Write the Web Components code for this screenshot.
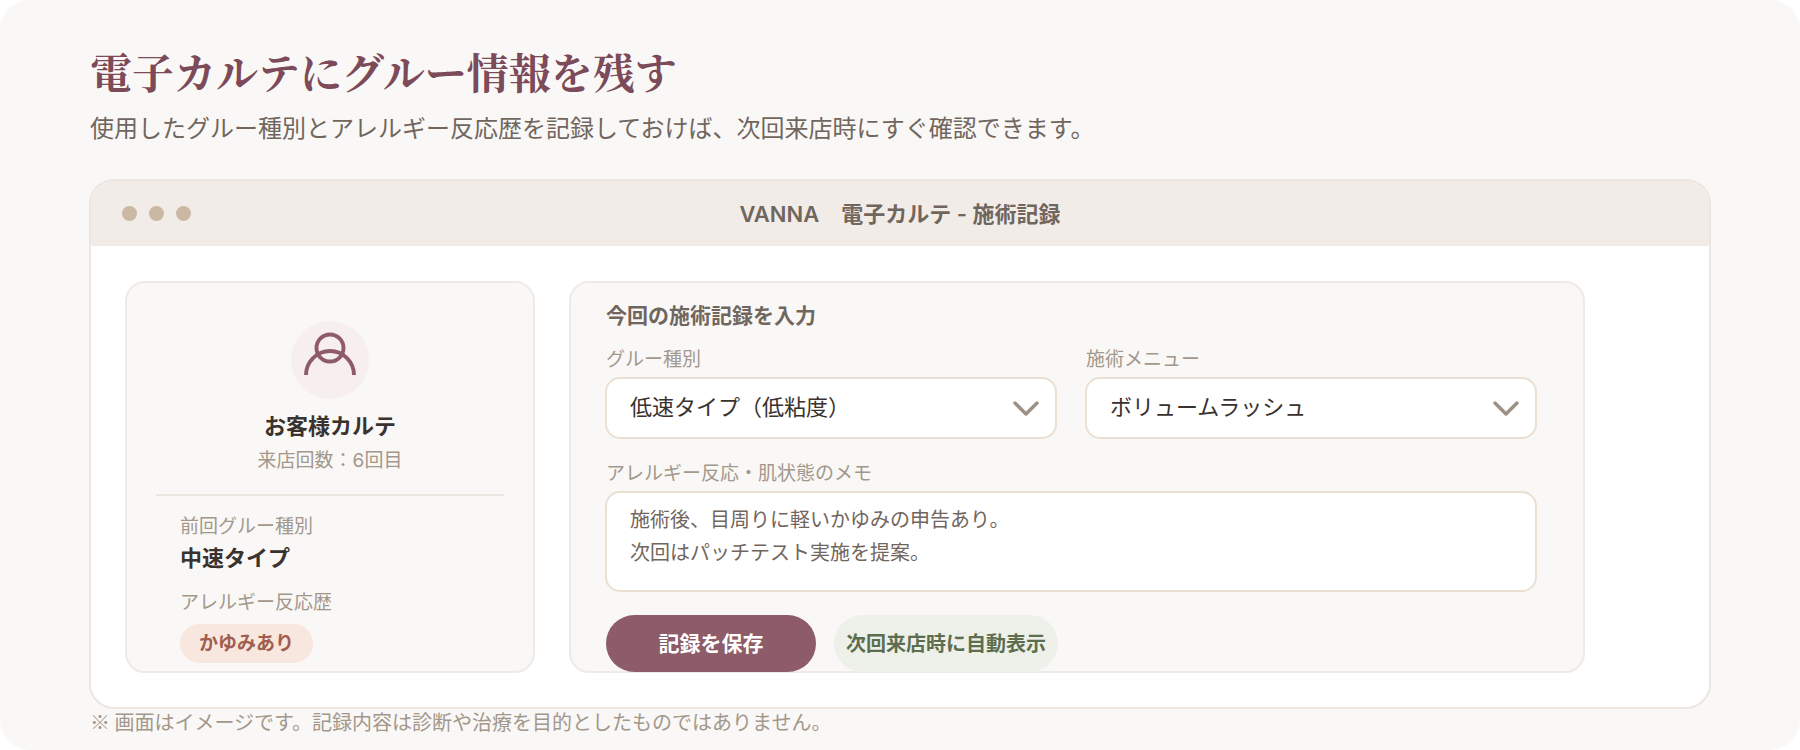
<!DOCTYPE html>
<html lang="ja">
<head>
<meta charset="utf-8">
<meta name="viewport" content="width=device-width, initial-scale=1">
<title>VANNA 電子カルテ - 施術記録</title>
<style>
  html { background: #fff; }
  body {
    margin: 0;
    font-family: Inter, "Noto Sans CJK JP", sans-serif;
    color: #3a322e;
    --paper: #f9f8f6;
    --panel-line: #f0eae6;
    --field-line: #ebdfd3;
    --plum: #8e5c68;
    --taupe: #71665e;
    --muted: #a3978b;
  }
</style>
</head>
<body>
<karte-page>
  <span slot="title">電子カルテにグルー情報を残す</span>
  <span slot="lead">使用したグルー種別とアレルギー反応歴を記録しておけば、次回来店時にすぐ確認できます。</span>
  <karte-window>
    <span slot="title">VANNA　電子カルテ - 施術記録</span>
    <client-card name="お客様カルテ" visits="来店回数：6回目">
      <client-fact label="前回グルー種別">中速タイプ</client-fact>
      <client-fact label="アレルギー反応歴"><tag-pill>かゆみあり</tag-pill></client-fact>
    </client-card>
    <record-form></record-form>
  </karte-window>
  <span slot="note">※ 画面はイメージです。記録内容は診断や治療を目的としたものではありません。</span>
</karte-page>

<script>
  function define(name, render) {
    customElements.define(name, class extends HTMLElement {
      constructor() {
        super();
        this.attachShadow({ mode: "open" });
      }
      connectedCallback() {
        this.shadowRoot.innerHTML = "<style>*{box-sizing:border-box}:host{box-sizing:border-box}</style>" + render(this);
      }
    });
  }

  define("karte-page", () => `
    <style>
      :host { display: block; min-height: 100vh; padding: 41px 89px 12px; background: var(--paper); border-radius: 30px; }
      h1 { margin: 0 1px; font: 700 42px/60px "Noto Serif CJK JP", "Noto Serif JP", "Noto Sans CJK JP", serif; color: #7c4a58; }
      .lead { margin: 11px 1px 34px; font-size: 24px; line-height: 33px; color: var(--taupe); }
      .note { margin: 0 1px; font-family: "Noto Sans CJK JP", sans-serif; font-size: 20px; line-height: 26px; color: var(--muted); }
    </style>
    <h1><slot name="title"></slot></h1>
    <p class="lead"><slot name="lead"></slot></p>
    <slot></slot>
    <p class="note"><slot name="note"></slot></p>`);

  define("karte-window", () => `
    <style>
      :host { display: block; background: #fff; border: 2px solid #ede6e0; border-radius: 25px; overflow: hidden; }
      header { display: grid; grid-template-columns: 1fr auto 1fr; align-items: center; height: 65px; padding: 0 31px; background: #f2ece8; }
      .dots { display: flex; gap: 12px; }
      .dots i { width: 15px; height: 15px; border-radius: 50%; background: #cbb8a4; }
      h2 { margin: 0; font-size: 22px; line-height: 32px; font-weight: 600; color: var(--taupe); }
      main { display: grid; grid-template-columns: 410fr 1016fr; gap: 34px; padding: 35px 124px 34px 34px; }
    </style>
    <header>
      <div class="dots" aria-hidden="true"><i></i><i></i><i></i></div>
      <h2><slot name="title"></slot></h2>
    </header>
    <main><slot></slot></main>`);

  define("client-card", el => `
    <style>
      :host { display: flex; flex-direction: column; padding: 37px 29px 8px; background: var(--paper); border: 2px solid var(--panel-line); border-radius: 20px; }
      .who { display: flex; flex-direction: column; align-items: center; padding-bottom: 20px; border-bottom: 2px solid #ebe6df; }
      svg { display: block; width: 80px; height: 80px; }
      h3 { margin: 10px 0 0; font-size: 22px; line-height: 32px; font-weight: 600; }
      p { margin: 6px 0 0; font-size: 19px; line-height: 26px; color: var(--muted); }
      .facts { display: flex; flex-direction: column; gap: 16px; padding: 18px 24px 0; }
    </style>
    <div class="who">
      <svg viewBox="0 0 80 80" fill="none" stroke="#8e5c68" stroke-width="3.9" aria-hidden="true">
        <circle cx="40" cy="40" r="39" fill="#f7eeef" stroke="none"/>
        <circle cx="40" cy="28" r="13.5"/>
        <path d="M16 55a24 24 0 0 1 48 0"/>
      </svg>
      <h3>${el.getAttribute("name")}</h3>
      <p>${el.getAttribute("visits")}</p>
    </div>
    <div class="facts"><slot></slot></div>`);

  define("client-fact", el => `
    <style>
      :host { display: block; }
      .label { font-size: 19px; line-height: 26px; color: var(--muted); }
      .value { margin-top: 2px; font-size: 22px; line-height: 32px; font-weight: 600; }
    </style>
    <div class="label">${el.getAttribute("label")}</div>
    <div class="value"><slot></slot></div>`);

  define("tag-pill", () => `
    <style>
      :host { display: flex; width: fit-content; height: 39px; align-items: center; margin-top: 8px; padding: 0 19px; border-radius: 20px; background: #f8e7de; color: #a15e4f; font-size: 19px; line-height: 26px; }
    </style>
    <slot></slot>`);

  define("select-field", el => `
    <style>
      :host { display: block; }
      label { display: block; margin: 0 1px 4px; font-size: 19px; line-height: 26px; color: var(--muted); }
      .box { display: grid; align-items: center; }
      select, svg { grid-area: 1 / 1; }
      select { appearance: none; width: 100%; height: 62px; margin: 0; padding: 0 60px 2px 23px; border: 2px solid var(--field-line); border-radius: 15px; background: #fff; color: inherit; font: 400 22px/32px Inter, "Noto Sans CJK JP", sans-serif; }
      svg { justify-self: end; width: 32px; height: 24px; margin-right: 15px; pointer-events: none; }
    </style>
    <label for="field">${el.getAttribute("label")}</label>
    <div class="box">
      <select id="field"><option selected>${el.getAttribute("value")}</option></select>
      <svg viewBox="0 0 32 24" fill="none" stroke="#9d9186" stroke-width="3.5" stroke-linecap="round" stroke-linejoin="round" aria-hidden="true"><path d="M5 7l11 11 11-11"/></svg>
    </div>`);

  define("memo-field", el => `
    <style>
      :host { display: block; }
      label { display: block; margin: 0 1px 4px; font-size: 19px; line-height: 26px; color: var(--muted); }
      textarea { display: block; width: 100%; height: 101px; margin: 0; padding: 11px 23px; border: 2px solid var(--field-line); border-radius: 15px; background: #fff; color: var(--taupe); resize: none; overflow: hidden; font: 400 20px/33px Inter, "Noto Sans CJK JP", sans-serif; }
    </style>
    <label for="memo">${el.getAttribute("label")}</label>
    <textarea id="memo">施術後、目周りに軽いかゆみの申告あり。
次回はパッチテスト実施を提案。</textarea>`);

  define("record-form", () => `
    <style>
      :host { display: block; padding: 17px 46px 0 34px; background: var(--paper); border: 2px solid var(--panel-line); border-radius: 20px; }
      h3 { margin: 0 1px 15px; font-size: 21px; line-height: 32px; font-weight: 600; color: var(--taupe); }
      .pair { display: grid; grid-template-columns: 1fr 1fr; gap: 28px; margin-bottom: 22px; }
      .actions { display: flex; gap: 18px; margin: 23px 1px -1px; }
      button, .auto { display: flex; align-items: center; justify-content: center; height: 57px; border: 0; border-radius: 29px; }
      button { width: 210px; padding: 0; background: var(--plum); color: #fff; font: 600 21px/32px Inter, "Noto Sans CJK JP", sans-serif; }
      .auto { padding: 0 12px; background: #edf1e9; color: #5d6e50; font-size: 20px; line-height: 32px; font-weight: 600; white-space: nowrap; }
    </style>
    <h3>今回の施術記録を入力</h3>
    <div class="pair">
      <select-field label="グルー種別" value="低速タイプ（低粘度）"></select-field>
      <select-field label="施術メニュー" value="ボリュームラッシュ"></select-field>
    </div>
    <memo-field label="アレルギー反応・肌状態のメモ"></memo-field>
    <div class="actions">
      <button type="button">記録を保存</button>
      <span class="auto">次回来店時に自動表示</span>
    </div>`);
</script>
</body>
</html>
